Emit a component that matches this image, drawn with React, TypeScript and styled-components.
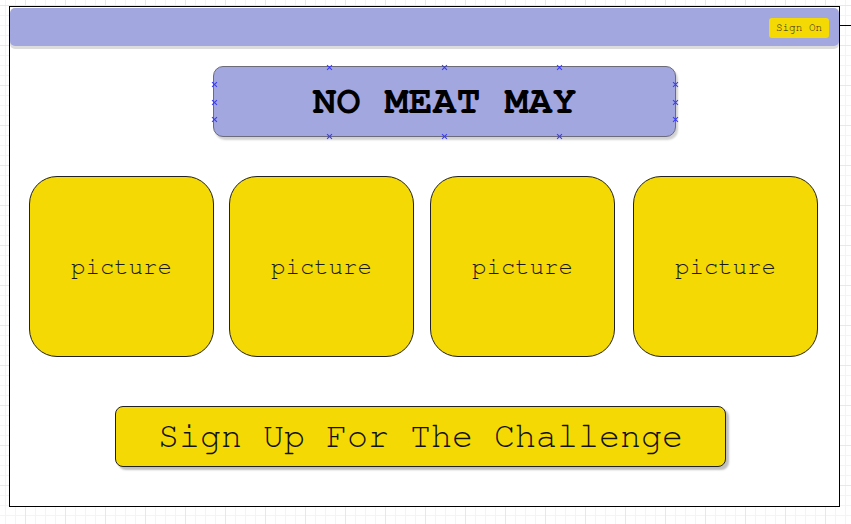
import React from "react";
import styled, { createGlobalStyle } from "styled-components";

const MONO = `"Nimbus Mono PS", "Nimbus Mono L", "FreeMono", "Courier New", "Liberation Mono", monospace`;

const GlobalStyle = createGlobalStyle`
  html, body {
    margin: 0;
    padding: 0;
  }
  body {
    width: 851px;
    height: 524px;
    overflow: hidden;
    background-color: #ffffff;
    background-image:
      linear-gradient(#e8e8e8 1px, transparent 1px),
      linear-gradient(90deg, #e8e8e8 1px, transparent 1px),
      linear-gradient(#f4f4f4 1px, transparent 1px),
      linear-gradient(90deg, #f4f4f4 1px, transparent 1px);
    background-size: 40px 40px, 40px 40px, 10px 10px, 10px 10px;
    background-position: 0 5px, 25px 0, 0 5px, 5px 0;
    font-family: ${MONO};
  }
`;

const Frame = styled.div`
  position: relative;
  box-sizing: border-box;
  margin: 6px 0 0 9px;
  width: 831px;
  height: 501px;
  border: 1px solid #000;
  background: #fff;
  display: flex;
  flex-direction: column;
  align-items: flex-start;

  &::after {
    content: "";
    position: absolute;
    left: 830px;
    top: 18px;
    width: 12px;
    height: 1px;
    background: #000;
  }
`;

const Header = styled.header`
  box-sizing: border-box;
  width: 829px;
  height: 38px;
  margin-top: 1px;
  background: #a2a7e0;
  border-radius: 5px;
  box-shadow: 0 3px 0 #dcdcdc;
  display: flex;
  align-items: center;
  justify-content: flex-end;
  padding-right: 10px;
`;

const SignOnButton = styled.button`
  box-sizing: border-box;
  width: 60px;
  height: 20px;
  border: none;
  border-radius: 3px;
  background: #f5d905;
  color: #1a1a1a;
  font-family: ${MONO};
  font-size: 11px;
  padding: 0;
  margin-top: 1px;
  cursor: pointer;
`;

const TitleBox = styled.div`
  position: relative;
  box-sizing: border-box;
  margin: 20px 0 0 203px;
  width: 463px;
  height: 71px;
  background: #a2a7e0;
  border: 1px solid #6b6b7a;
  border-radius: 10px;
  box-shadow: 2px 3px 2px rgba(0, 0, 0, 0.18);
  display: flex;
  align-items: center;
  justify-content: center;
`;

const Title = styled.h1`
  margin: 0;
  font-family: ${MONO};
  font-weight: bold;
  font-size: 40px;
  color: #000;
  letter-spacing: 0;
  transform: translateY(-1px);
`;

const Handle = styled.span<{ $x: string; $y: string }>`
  position: absolute;
  left: ${(p) => p.$x};
  top: ${(p) => p.$y};
  width: 6px;
  height: 6px;
  margin: -3px 0 0 -3px;
  pointer-events: none;
  &::before,
  &::after {
    content: "";
    position: absolute;
    left: 50%;
    top: 50%;
    width: 7px;
    height: 1px;
    background: #3a3af0;
    margin-left: -3.5px;
  }
  &::before {
    transform: rotate(45deg);
  }
  &::after {
    transform: rotate(-45deg);
  }
`;

const CardRow = styled.div`
  display: flex;
  margin: 39px 0 0 19px;
  gap: 15px;
`;

const Card = styled.div<{ $shift?: number }>`
  box-sizing: border-box;
  width: 185px;
  height: 181px;
  margin-left: ${(p) => p.$shift ?? 0}px;
  background: #f5d905;
  border: 1px solid #222;
  border-radius: 28px;
  display: flex;
  align-items: center;
  justify-content: center;
  font-family: ${MONO};
  font-size: 24px;
  color: #1a1a1a;
  padding-top: 1px;
`;

const SignUpButton = styled.button`
  box-sizing: border-box;
  margin: 49px 0 0 105px;
  width: 611px;
  height: 61px;
  background: #f5d905;
  border: 1px solid #222;
  border-radius: 8px;
  box-shadow: 3px 3px 2px rgba(0, 0, 0, 0.25);
  font-family: ${MONO};
  font-size: 35px;
  color: #111;
  padding: 0;
  cursor: pointer;
`;

const handlePositions: Array<[string, string]> = [
  ["25%", "0%"],
  ["50%", "0%"],
  ["75%", "0%"],
  ["25%", "100%"],
  ["50%", "100%"],
  ["75%", "100%"],
  ["0%", "25%"],
  ["0%", "50%"],
  ["0%", "75%"],
  ["100%", "25%"],
  ["100%", "50%"],
  ["100%", "75%"],
];

const cardShifts = [0, 0, 1, 3];

export default function App() {
  return (
    <>
      <GlobalStyle />
      <Frame>
        <Header>
          <SignOnButton>Sign On</SignOnButton>
        </Header>
        <TitleBox>
          <Title>NO MEAT MAY</Title>
          {handlePositions.map(([x, y], i) => (
            <Handle key={i} $x={x} $y={y} />
          ))}
        </TitleBox>
        <CardRow>
          {cardShifts.map((s, i) => (
            <Card key={i} $shift={s}>
              picture
            </Card>
          ))}
        </CardRow>
        <SignUpButton>Sign Up For The Challenge</SignUpButton>
      </Frame>
    </>
  );
}
